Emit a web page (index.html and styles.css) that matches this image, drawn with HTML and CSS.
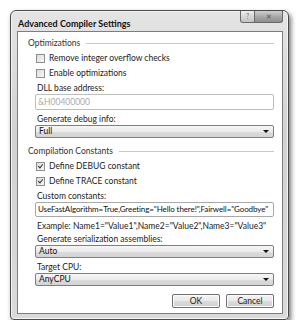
FILE: index.html
```html
<!DOCTYPE html>
<html lang="en">
<head>
  <meta charset="UTF-8">
  <title>Advanced Compiler Settings</title>
  <link rel="stylesheet" href="styles.css">
</head>
<body>

  <div class="window">
    <div class="titlebar">
      <span class="title">Advanced Compiler Settings</span>
      <div class="caption-btns">
        <span class="cap-btn help">?</span>
        <span class="cap-btn close">&#x2715;</span>
      </div>
    </div>

    <div class="client">
      <div class="group-head"><span>Optimizations</span><i class="rule"></i></div>
      <div class="group">
        <label class="check"><span class="box"></span>Remove integer overflow checks</label>
        <label class="check"><span class="box"></span>Enable optimizations</label>
        <div class="label">DLL base address:</div>
        <div class="textbox disabled">&amp;H00400000</div>
        <div class="label">Generate debug info:</div>
        <div class="select">Full</div>
      </div>

      <div class="group-head second"><span>Compilation Constants</span><i class="rule"></i></div>
      <div class="group">
        <label class="check"><span class="box checked"></span>Define DEBUG constant</label>
        <label class="check"><span class="box checked"></span>Define TRACE constant</label>
        <div class="label">Custom constants:</div>
        <div class="textbox long">UseFastAlgorithm=True,Greeting="Hello there!",Fairwell="Goodbye"</div>
        <div class="label example">Example: Name1="Value1",Name2="Value2",Name3="Value3"</div>
        <div class="label tight">Generate serialization assemblies:</div>
        <div class="select">Auto</div>
        <div class="label">Target CPU:</div>
        <div class="select">AnyCPU</div>
      </div>

      <div class="actions">
        <button class="btn">OK</button>
        <button class="btn">Cancel</button>
      </div>
    </div>
  </div>

</body>
</html>
```

FILE: styles.css
```css
body {
  margin: 0;
  background-color: #fff;
  font-family: 'Lato', 'Open Sans', sans-serif;
  font-size: 8.5px;
  color: #222;
}

.window {
  margin: 10px 0 0 10px;
  width: 279px;
  height: 310px;
  box-sizing: border-box;
  padding: 0 5px 5px 6px;
  border: 1px solid #4a4a4a;
  border-radius: 6px 6px 4px 4px;
  background: linear-gradient(180deg, #e4e4e4 0%, #d2d2d2 40%, #dadada 100%);
  box-shadow: 2px 3px 5px rgba(0,0,0,0.55), inset 0 0 0 1px #f4f4f4;
  display: flex;
  flex-direction: column;
}

.titlebar {
  height: 20px;
  display: flex;
  justify-content: space-between;
  align-items: flex-start;
}

.title {
  font-weight: bold;
  font-size: 9px;
  color: #111;
  margin: 7px 0 0 1px;
}

.caption-btns {
  display: flex;
}

.cap-btn {
  height: 11px;
  border: 1px solid #6a6a6a;
  border-top: none;
  font-size: 7px;
  line-height: 11px;
  text-align: center;
  color: #777;
  background: linear-gradient(180deg, #eee 0%, #d6d6d6 50%, #c4c4c4 100%);
}

.help {
  width: 13px;
  border-radius: 0 0 0 3px;
}

.close {
  width: 27px;
  border-left: none;
  border-radius: 0 0 3px 0;
  color: #555;
  background: linear-gradient(180deg, #cfcfcf 0%, #a9a9a9 50%, #8e8e8e 100%);
}

.client {
  flex: 1;
  background: #fff;
  border: 1px solid #7d7d7d;
  padding: 5px 8px 0 10px;
  display: flex;
  flex-direction: column;
}

.group-head {
  height: 12px;
  line-height: 12px;
  display: flex;
  align-items: center;
  color: #333;
}

.group-head.second {
  margin-top: 7px;
}

.rule {
  flex: 1;
  height: 1px;
  background: #c9c9c9;
  margin-left: 6px;
}

.group {
  padding-left: 7px;
  display: flex;
  flex-direction: column;
}

.check {
  height: 12px;
  margin-top: 3px;
  display: flex;
  align-items: center;
  color: #222;
}

.box {
  width: 7px;
  height: 7px;
  border: 1px solid #8e8f8f;
  background: linear-gradient(135deg, #dcdcdc, #f8f8f8);
  margin: 0 4px 0 1px;
  position: relative;
}

.box.checked::after {
  content: "";
  position: absolute;
  left: 2px;
  top: 0px;
  width: 2px;
  height: 4px;
  border: solid #333;
  border-width: 0 1.5px 1.5px 0;
  transform: rotate(40deg);
}

.label {
  height: 12px;
  line-height: 12px;
  margin-top: 3px;
  padding-left: 2px;
}

.label.tight {
  margin-top: 1px;
}

.textbox {
  height: 13px;
  line-height: 13px;
  border: 1px solid #a9a9a9;
  border-radius: 2px;
  padding: 0 1px 0 2px;
  white-space: nowrap;
  overflow: hidden;
  color: #111;
}

.textbox.long {
  font-size: 8px;
  letter-spacing: -0.1px;
}

.textbox.disabled {
  height: 14px;
  line-height: 14px;
  color: #aaa;
  border-color: #bdbdbd;
}

.select {
  height: 11px;
  line-height: 11px;
  border: 1px solid #7e7e7e;
  border-radius: 2px;
  padding: 0 3px;
  background: linear-gradient(180deg, #f6f6f6 0%, #ebebeb 50%, #dcdcdc 51%, #d4d4d4 100%);
  color: #111;
  position: relative;
}

.select::after {
  content: "";
  position: absolute;
  right: 4px;
  top: 4px;
  border-left: 3px solid transparent;
  border-right: 3px solid transparent;
  border-top: 3px solid #111;
}

.actions {
  margin-top: 8px;
  display: flex;
  justify-content: flex-end;
  gap: 6px;
}

.btn {
  width: 48px;
  height: 14px;
  padding: 0;
  font-family: inherit;
  font-size: 8.5px;
  color: #222;
  border: 1px solid #707070;
  border-radius: 2px;
  background: linear-gradient(180deg, #f4f4f4 0%, #e9e9e9 50%, #dcdcdc 51%, #cfcfcf 100%);
  box-shadow: inset 0 0 0 1px #fbfbfb;
}
```
